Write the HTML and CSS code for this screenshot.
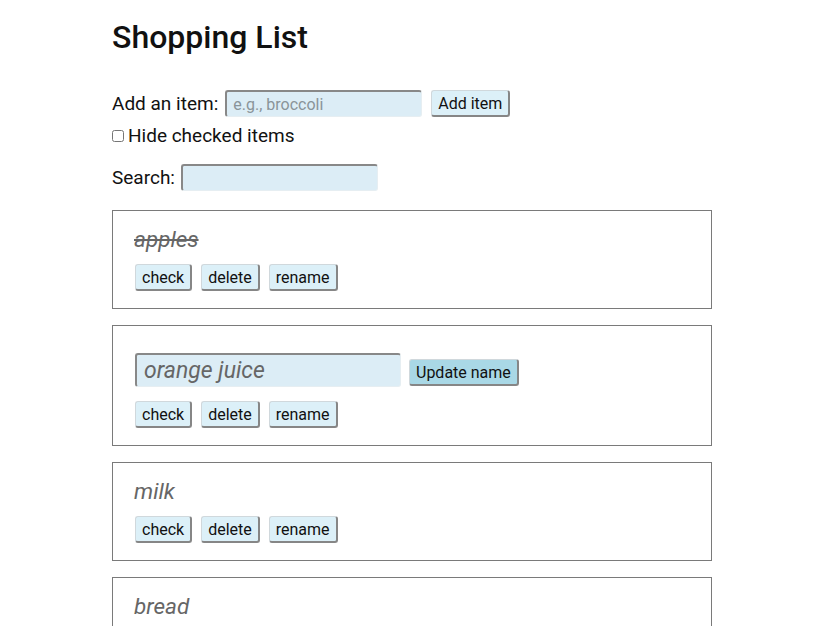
FILE: index.html
```html
<!DOCTYPE html>
<html>
<head>
<meta charset="utf-8">
<link rel="stylesheet" href="styles.css">
</head>
<body>
<div class="app">
  <h1 class="title">Shopping List</h1>
  <div class="row add-row">
    <label class="label">Add an item:</label>
    <input class="field" type="text" placeholder="e.g., broccoli">
    <button class="btn">Add item</button>
  </div>
  <div class="row hide-row">
    <input class="check" type="checkbox">
    <span class="label">Hide checked items</span>
  </div>
  <div class="row search-row">
    <label class="label">Search:</label>
    <input class="field" type="text">
  </div>
  <ul class="list">
    <li class="card">
      <div class="name done">apples</div>
      <div class="actions">
        <button class="btn">check</button>
        <button class="btn">delete</button>
        <button class="btn">rename</button>
      </div>
    </li>
    <li class="card">
      <div class="edit-row">
        <input class="field name-field" type="text" value="orange juice">
        <button class="btn btn-update">Update name</button>
      </div>
      <div class="actions">
        <button class="btn">check</button>
        <button class="btn">delete</button>
        <button class="btn">rename</button>
      </div>
    </li>
    <li class="card">
      <div class="name">milk</div>
      <div class="actions">
        <button class="btn">check</button>
        <button class="btn">delete</button>
        <button class="btn">rename</button>
      </div>
    </li>
    <li class="card">
      <div class="name">bread</div>
      <div class="actions">
        <button class="btn">check</button>
        <button class="btn">delete</button>
        <button class="btn">rename</button>
      </div>
    </li>
  </ul>
</div>
</body>
</html>
```

FILE: styles.css
```css
html, body {
  margin: 0;
  padding: 0;
  background: #fff;
}
body {
  font-family: Roboto, "Liberation Sans", sans-serif;
  color: #111;
}
.app {
  width: 600px;
  margin-left: 112px;
  padding-top: 19px;
}
.title {
  margin: 0 0 34px 0;
  font-size: 32px;
  font-weight: 500;
  line-height: 37px;
  color: #111;
}
.row {
  display: flex;
  align-items: center;
}
.label {
  font-size: 19px;
  line-height: 22px;
}
.add-row {
  gap: 7px;
}
.add-row .btn {
  margin-left: 2px;
}
.hide-row {
  margin-top: 8px;
  gap: 4px;
}
.check {
  width: 12px;
  height: 12px;
  margin: 0;
}
.search-row {
  margin-top: 17px;
  gap: 6px;
}
.field {
  box-sizing: border-box;
  width: 197px;
  height: 27px;
  background: #dcedf6;
  border: 1px solid #e6eef2;
  border-top: 2px solid #888;
  border-left: 2px solid #888;
  border-radius: 3px;
  font-family: inherit;
  font-size: 16px;
  padding: 0 6px;
  color: #333;
  outline: none;
}
.field::placeholder {
  color: #8a9499;
}
.btn {
  box-sizing: border-box;
  height: 27px;
  padding: 0 6px;
  background: #dcf0f8;
  border: 1px solid #d0d8dc;
  border-right: 2px solid #868686;
  border-bottom: 2px solid #868686;
  border-radius: 3px;
  font-family: inherit;
  font-size: 16px;
  color: #111;
}
.list {
  list-style: none;
  margin: 19px 0 0 0;
  padding: 0;
  display: flex;
  flex-direction: column;
  gap: 16px;
}
.card {
  display: flex;
  flex-direction: column;
  border: 1px solid #7a7a7a;
  padding: 15px 20px 17px 21px;
}
.name {
  font-size: 22.5px;
  line-height: 26px;
  font-style: italic;
  color: #666;
}
.name.done {
  text-decoration: line-through;
}
.actions {
  display: flex;
  gap: 9px;
  margin-top: 12px;
  padding-left: 1px;
}
.edit-row {
  display: flex;
  align-items: center;
  gap: 8px;
  margin-top: 12px;
  margin-bottom: 2px;
  padding-left: 1px;
}
.name-field {
  width: 266px;
  height: 34px;
  font-size: 23px;
  font-style: italic;
  color: #666;
  padding: 0 7px;
}
.btn-update {
  background: #a9d8e6;
  margin-top: 5px;
}
```
